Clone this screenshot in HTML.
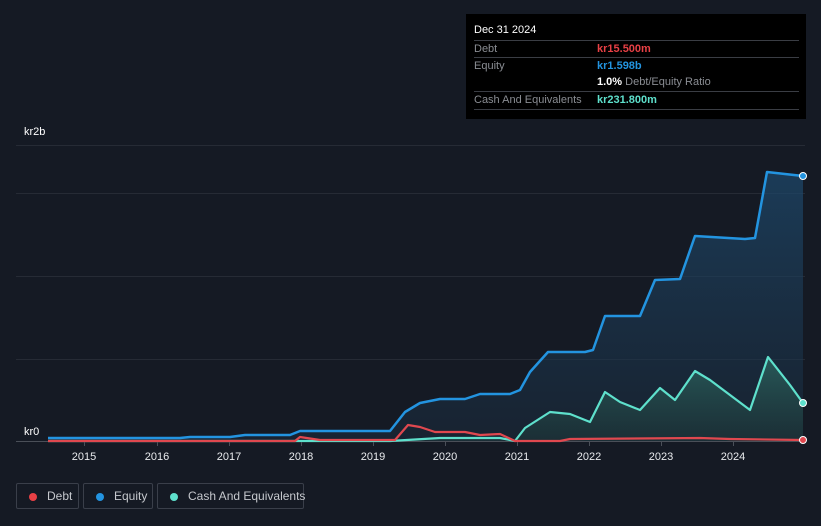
<!DOCTYPE html>
<html><head><meta charset="utf-8"><style>
body{margin:0;width:821px;height:526px;background:#151a24;font-family:"Liberation Sans",sans-serif;overflow:hidden;position:relative}
.tt{position:absolute;left:466px;top:14px;width:340px;height:105px;background:#000;color:#fff;font-size:11px}
.row{position:absolute;left:8px;width:325px;border-top:1px solid #3a3d44;height:17px;line-height:17px}
.lbl{color:#8a8d93}
.v{position:absolute;left:123px;font-weight:bold;white-space:nowrap}
.leg{position:absolute;top:483px;height:26px;border:1px solid #3a3f4a;border-radius:2px;color:#c5c8cd;font-size:12px;line-height:24px;box-sizing:border-box;white-space:nowrap}
.dot{display:inline-block;width:8px;height:8px;border-radius:50%;margin:0 10px 0 12px;vertical-align:-0.5px}
</style></head><body>
<svg width="821" height="526" style="position:absolute;left:0;top:0">
<defs><linearGradient id="g" x1="0" y1="0" x2="0" y2="1"><stop offset="0" stop-color="#1e4a6e" stop-opacity=".7"/><stop offset="1" stop-color="#1a2c3e" stop-opacity=".5"/></linearGradient>
<linearGradient id="c" x1="0" y1="0" x2="0" y2="1"><stop offset="0" stop-color="#2f6e66" stop-opacity=".7"/><stop offset="1" stop-color="#1e3a3a" stop-opacity=".5"/></linearGradient></defs>
<g stroke="#262b35" stroke-width="1"><line x1="16" y1="145.5" x2="805" y2="145.5"/><line x1="16" y1="193.5" x2="805" y2="193.5"/><line x1="16" y1="276.5" x2="805" y2="276.5"/><line x1="16" y1="359.5" x2="805" y2="359.5"/></g>
<path d="M48,438 L180,438 190,437 230,437 245,435 290,435 300,431 390,431 405,412 420,403 440,399 465,399 480,394 510,394 520,390 530,372 548,352 585,352 593,350 605,316 640,316 655,280 680,279 695,236 745,239 755,238 767,172 803,176 L803,441 48,441Z" fill="url(#g)"/>
<path d="M48,441 L390,441 440,438 500,438 515,441 525,428 550,412 570,414 590,422 605,392 620,402 640,410 660,388 675,400 695,371 710,380 750,410 768,357 790,385 803,403 L803,441Z" fill="url(#c)"/>
<line x1="16" y1="441.5" x2="805" y2="441.5" stroke="#4a4f58"/>
<path d="M48,441 L390,441 440,438 500,438 515,441 525,428 550,412 570,414 590,422 605,392 620,402 640,410 660,388 675,400 695,371 710,380 750,410 768,357 790,385 803,403" fill="none" stroke="#5ee0cc" stroke-width="2.2" stroke-linejoin="round"/>
<path d="M48,441 L295,441 300,437 320,440 395,440 408,425 420,427 435,432 465,432 480,435 500,434 515,441 560,441 570,439 700,438 730,439 803,440" fill="none" stroke="#e0484f" stroke-width="2.2" stroke-linejoin="round"/>
<path d="M48,438 L180,438 190,437 230,437 245,435 290,435 300,431 390,431 405,412 420,403 440,399 465,399 480,394 510,394 520,390 530,372 548,352 585,352 593,350 605,316 640,316 655,280 680,279 695,236 745,239 755,238 767,172 803,176" fill="none" stroke="#2394e0" stroke-width="2.5" stroke-linejoin="round"/>
<circle cx="803" cy="176" r="3.5" fill="#2394e0" stroke="#fff" stroke-width="1"/>
<circle cx="803" cy="403" r="3.5" fill="#5ee0cc" stroke="#fff" stroke-width="1"/>
<circle cx="803" cy="440" r="3.5" fill="#e0484f" stroke="#fff" stroke-width="1"/>
<g fill="#fff" font-size="11"><text x="24" y="135">kr2b</text><text x="24" y="435">kr0</text></g>
<g fill="#e8eaed" font-size="11" text-anchor="middle"><text x="84" y="460">2015</text><text x="157" y="460">2016</text><text x="229" y="460">2017</text><text x="301" y="460">2018</text><text x="373" y="460">2019</text><text x="445" y="460">2020</text><text x="517" y="460">2021</text><text x="589" y="460">2022</text><text x="661" y="460">2023</text><text x="733" y="460">2024</text></g>
<g stroke="#4a4f58"><line x1="84.5" y1="442" x2="84.5" y2="446"/><line x1="157.5" y1="442" x2="157.5" y2="446"/><line x1="229.5" y1="442" x2="229.5" y2="446"/><line x1="301.5" y1="442" x2="301.5" y2="446"/><line x1="373.5" y1="442" x2="373.5" y2="446"/><line x1="445.5" y1="442" x2="445.5" y2="446"/><line x1="517.5" y1="442" x2="517.5" y2="446"/><line x1="589.5" y1="442" x2="589.5" y2="446"/><line x1="661.5" y1="442" x2="661.5" y2="446"/><line x1="733.5" y1="442" x2="733.5" y2="446"/></g>
</svg>
<div class="tt">
<div style="position:absolute;left:8px;top:10px">Dec 31 2024</div>
<div class="row" style="top:26px"><span class="lbl">Debt</span><span class="v" style="color:#e84045">kr15.500m</span></div>
<div class="row" style="top:43px"><span class="lbl">Equity</span><span class="v" style="color:#2394e0">kr1.598b</span></div>
<div class="row" style="top:60px;border-top:none"><span class="v"><b>1.0%</b> <span style="color:#8a8d93;font-weight:normal">Debt/Equity Ratio</span></span></div>
<div class="row" style="top:77px"><span class="lbl">Cash And Equivalents</span><span class="v" style="color:#5ee0cc">kr231.800m</span></div>
<div class="row" style="top:95px;height:0"></div>
</div>
<div class="leg" style="left:16px;width:63px"><span class="dot" style="background:#e84045"></span>Debt</div>
<div class="leg" style="left:83px;width:70px"><span class="dot" style="background:#2394e0"></span>Equity</div>
<div class="leg" style="left:157px;width:147px"><span class="dot" style="background:#5ee0cc"></span>Cash And Equivalents</div>
</body></html>
